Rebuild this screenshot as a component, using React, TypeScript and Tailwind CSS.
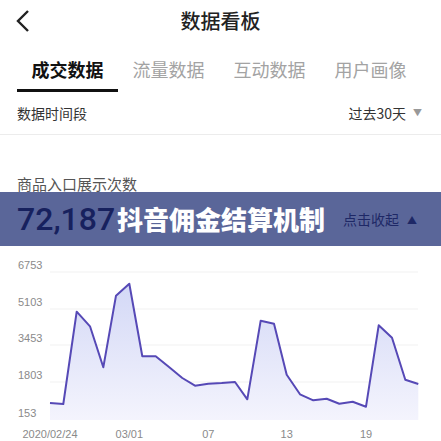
import React from "react";

const points: [number, number][] = [
  [50, 404], [63.3, 405], [76.7, 312.7], [90, 327.3], [103.3, 368.3],
  [116, 296.7], [129.3, 284.7], [142.3, 357.3], [155.7, 357.3], [169, 368],
  [182.3, 379], [195, 386.7], [208.3, 384.7], [221.7, 384], [235, 383],
  [247.3, 400.3], [260.7, 321.7], [274, 324.7], [286.7, 375.7], [300, 395.3],
  [313.3, 401.3], [326.7, 399.7], [339.3, 404.7], [352.7, 402.7], [366, 407.7],
  [378.7, 326.3], [392, 338.7], [405.3, 380.7], [418.3, 385],
];

const TOP = 247;

const yTicks = [
  { label: "6753", y: 273 },
  { label: "5103", y: 310 },
  { label: "3453", y: 346 },
  { label: "1803", y: 383 },
  { label: "153", y: 421 },
];

const xTicks = [
  { label: "2020/02/24", x: 50 },
  { label: "03/01", x: 129.3 },
  { label: "07", x: 208.3 },
  { label: "13", x: 286.7 },
  { label: "19", x: 366 },
];

function Chart() {
  const line = points.map(([x, y]) => `${x},${y - TOP}`).join(" ");
  const area = `M50,${421 - TOP} L${line.replace(/ /g, " L")} L418.3,${421 - TOP} Z`;
  return (
    <svg width="441" height="194" viewBox="0 0 441 194" className="block">
      <defs>
        <linearGradient id="fill" x1="0" y1="0" x2="0" y2="1">
          <stop offset="0%" stopColor="#d3d8f6" />
          <stop offset="100%" stopColor="#f4f4fd" />
        </linearGradient>
      </defs>
      {yTicks.slice(0, 4).map((t) => (
        <line key={t.label} x1="50" x2="418" y1={t.y - TOP} y2={t.y - TOP} stroke="#f1f1f1" strokeWidth="1" />
      ))}
      <path d={area} fill="url(#fill)" />
      <polyline points={line} fill="none" stroke="#5649b6" strokeWidth="2" strokeLinejoin="round" />
      {yTicks.map((t) => (
        <text key={t.label} x="18" y={t.y - TOP - 3} fontSize="11" fill="#8a8a8a" fontFamily="Liberation Sans, sans-serif">
          {t.label}
        </text>
      ))}
      {xTicks.map((t) => (
        <text key={t.label} x={t.x} y={435 - TOP + 4} fontSize="11" fill="#8a8a8a" textAnchor="middle" fontFamily="Liberation Sans, sans-serif">
          {t.label}
        </text>
      ))}
    </svg>
  );
}

export default function App() {
  const tabs = ["成交数据", "流量数据", "互动数据", "用户画像"];
  return (
    <div
      className="w-[441px] h-[441px] overflow-hidden bg-white"
      style={{ fontFamily: '"Noto Sans CJK SC", "Liberation Sans", sans-serif' }}
    >
      <header className="relative h-[42px] flex items-center justify-center">
        <svg className="absolute left-[14px] top-[9px]" width="18" height="24" viewBox="0 0 18 24">
          <polyline points="14,2 4,12 14,22" fill="none" stroke="#222" strokeWidth="2.4" />
        </svg>
        <h1 className="text-[20px] font-medium text-[#222] leading-none">数据看板</h1>
      </header>
      <nav className="flex px-[17px] h-[50px]">
        {tabs.map((t, i) => (
          <div key={t} className="w-[101px] flex flex-col items-center justify-end">
            <span
              className={
                i === 0
                  ? "text-[18px] font-bold text-[#111] leading-none"
                  : "text-[18px] text-[#a3a3a3] leading-none"
              }
            >
              {t}
            </span>
            <div className={i === 0 ? "mt-[11px] h-[3px] w-full bg-[#111]" : "mt-[11px] h-[3px] w-full"} />
          </div>
        ))}
      </nav>
      <div className="h-[43px] px-[17px] flex items-center justify-between border-b border-[#ececec]">
        <span className="text-[14px] text-[#333]">数据时间段</span>
        <span className="flex items-center gap-[7px] text-[14px] text-[#333] mr-[2px]">
          过去30天
          <span className="text-[9px] text-[#999]">▼</span>
        </span>
      </div>
      <div className="h-[57px] px-[17px] flex items-end">
        <span className="text-[15px] text-[#555] leading-none mb-[1px]">商品入口展示次数</span>
      </div>
      <div className="h-[54px] bg-[#5a6699] flex items-center pl-[17px] pr-[24px]">
        <span
          className="text-[32px] font-medium text-[#17215e] leading-none"
          style={{ fontFamily: 'Roboto, "Liberation Sans", sans-serif' }}
        >
          72,187
        </span>
        <span className="ml-[2px] text-[26px] font-black text-white leading-none">抖音佣金结算机制</span>
        <span className="ml-auto flex items-center gap-[8px] text-[14px] text-[#1e2866]">
          点击收起
          <span className="text-[10px]">▲</span>
        </span>
      </div>
      <Chart />
    </div>
  );
}
